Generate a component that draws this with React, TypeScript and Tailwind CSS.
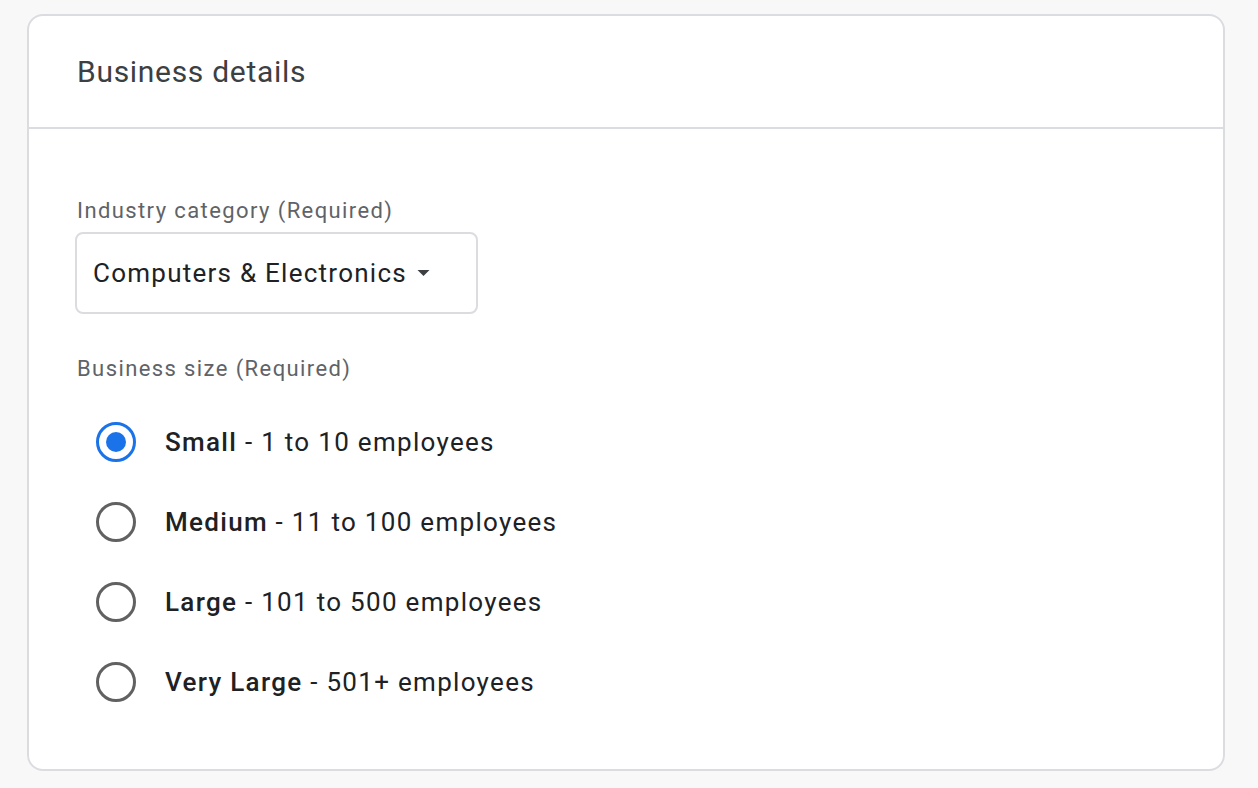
import React, { useState } from 'react';

const sizes = [
  { id: 'small', name: 'Small', range: '1 to 10 employees' },
  { id: 'medium', name: 'Medium', range: '11 to 100 employees' },
  { id: 'large', name: 'Large', range: '101 to 500 employees' },
  { id: 'xl', name: 'Very Large', range: '501+ employees' },
];

const Radio: React.FC<{ checked: boolean }> = ({ checked }) => (
  <span
    className={`flex h-[40px] w-[40px] shrink-0 items-center justify-center rounded-full border-[3px] ${
      checked ? 'border-[#1a73e8]' : 'border-[#616161]'
    }`}
  >
    {checked && <span className="h-[20px] w-[20px] rounded-full bg-[#1a73e8]" />}
  </span>
);

export default function App() {
  const [size, setSize] = useState('small');

  return (
    <div
      className="min-h-[788px] bg-[#f8f8f8] pl-[27px] pr-[33px] pt-[14px]"
      style={{ fontFamily: 'Roboto, "Noto Sans", sans-serif' }}
    >
      <div className="h-[757px] rounded-[16px] border-2 border-[#dadce0] bg-white">
        {/* Header */}
        <div className="flex h-[113px] items-center border-b-2 border-[#dadce0] pl-[48px]">
          <h1 className="text-[30px] font-normal tracking-[0.7px] text-[#3c4043]">Business details</h1>
        </div>

        {/* Body */}
        <div className="pl-[48px] pt-[68px]">
          <label className="block text-[22px] leading-[28px] tracking-[1.4px] text-[#5f6368]">
            Industry category (Required)
          </label>
          <button className="-ml-[2px] mt-[7px] flex h-[82px] w-[403px] items-center rounded-[8px] border-2 border-[#dadce0] pl-[16px]">
            <span className="text-[26px] tracking-[1.25px] text-[#202124]">Computers &amp; Electronics</span>
            <svg className="ml-[10px] h-[6px] w-[13px]" viewBox="0 0 10 5">
              <path d="M0 0 L5 5 L10 0 Z" fill="#3c4043" />
            </svg>
          </button>

          <label className="mt-[41px] block text-[22px] leading-[28px] tracking-[1.4px] text-[#5f6368]">
            Business size (Required)
          </label>

          <div className="mt-[39px] flex flex-col gap-[40px]">
            {sizes.map((s) => (
              <div
                key={s.id}
                className="flex h-[40px] cursor-pointer items-center pl-[19px]"
                onClick={() => setSize(s.id)}
              >
                <Radio checked={size === s.id} />
                <span className="ml-[29px] text-[26px] tracking-[1.3px] text-[#202124]">
                  <span className="font-medium">{s.name}</span> - {s.range}
                </span>
              </div>
            ))}
          </div>
        </div>
      </div>
    </div>
  );
}
